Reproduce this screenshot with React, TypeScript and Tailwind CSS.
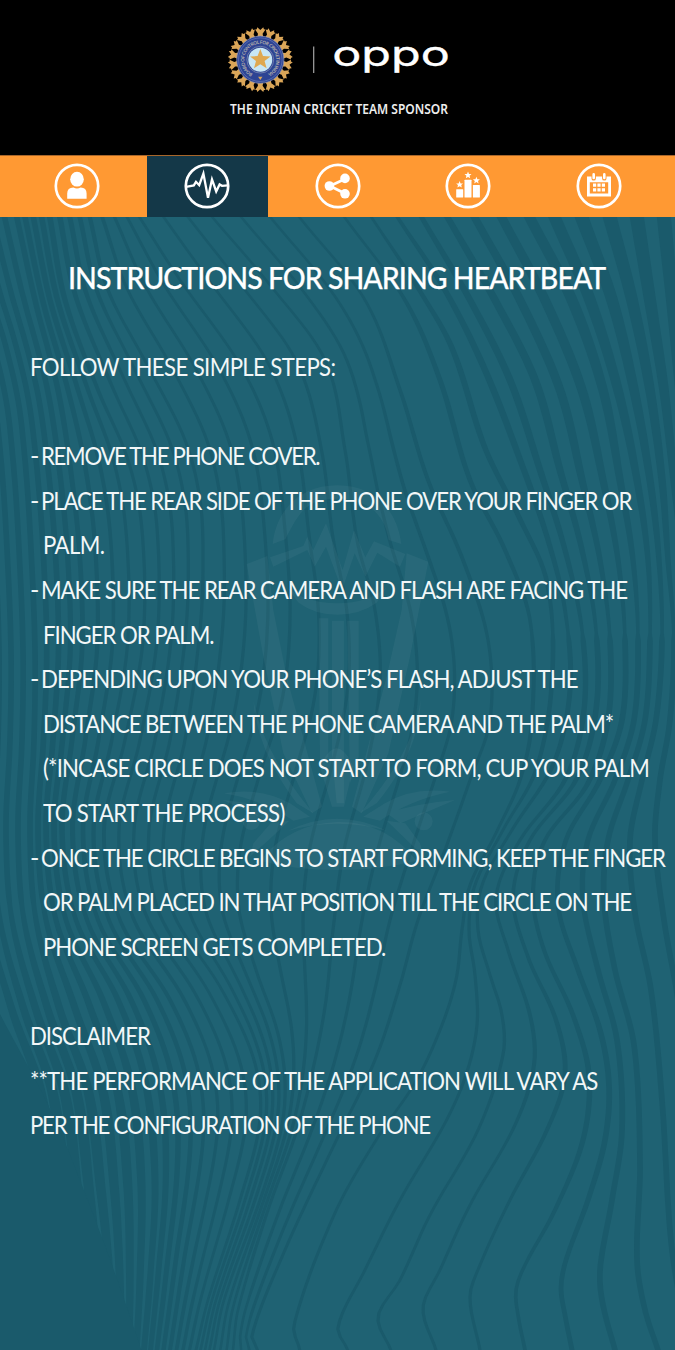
import type { ReactNode } from "react";

type Pt = [number, number];

/* ---------- wavy background ---------- */

const masters: { pts: Pt[]; between: number }[] = [
  { between: 3, pts: [[-32, 218], [-12, 290], [4, 340], [18, 400], [25, 460], [30, 530], [35, 650], [34, 740], [30, 830], [36, 920], [60, 1010], [88, 1090], [101, 1190], [109, 1270], [114, 1350]] },
  { between: 3, pts: [[17, 218], [35, 300], [58, 390], [72, 480], [80, 560], [82, 650], [72, 740], [62, 830], [76, 920], [118, 1000], [145, 1080], [155, 1180], [150, 1280], [144, 1350]] },
  { between: 3, pts: [[50, 218], [65, 300], [98, 390], [128, 460], [142, 530], [143, 640], [125, 740], [104, 830], [120, 920], [170, 1000], [198, 1070], [203, 1140], [184, 1260], [170, 1350]] },
  { between: 3, pts: [[90, 218], [108, 290], [150, 370], [185, 440], [200, 500], [203, 560], [200, 630], [185, 740], [164, 830], [172, 910], [222, 990], [254, 1060], [260, 1120], [240, 1200], [208, 1300], [196, 1350]] },
  { between: 2, pts: [[140, 218], [180, 280], [240, 365], [272, 440], [285, 530], [290, 620], [282, 700], [258, 780], [240, 850], [239, 910], [256, 970], [277, 1030], [285, 1080], [281, 1130], [260, 1200], [224, 1300], [214, 1350]] },
  { between: 2, pts: [[213, 218], [270, 285], [325, 360], [345, 450], [357, 540], [375, 610], [380, 680], [368, 760], [344, 850], [333, 930], [326, 1000], [315, 1060], [297, 1130], [268, 1210], [238, 1310], [233, 1350]] },
  { between: 0, pts: [[300, 218], [365, 300], [400, 390], [428, 480], [463, 560], [488, 640], [490, 720], [470, 780], [445, 850], [418, 920], [400, 985], [375, 1060], [335, 1143], [285, 1250], [252, 1335], [258, 1350]] },
  { between: 0, pts: [[345, 218], [405, 300], [440, 380], [470, 480], [505, 550], [530, 620], [532, 720], [520, 780], [495, 835], [470, 885], [462, 930], [456, 980], [440, 1030], [415, 1083], [378, 1137], [335, 1213], [294, 1325], [300, 1350]] },
  { between: 0, pts: [[372, 218], [418, 288], [452, 348], [485, 448], [518, 515], [547, 582], [552, 680], [536, 770], [503, 830], [475, 885], [469, 930], [475, 975], [477, 1025], [466, 1075], [445, 1123], [400, 1200], [365, 1270], [338, 1327], [348, 1350]] },
  { between: 0, pts: [[398, 218], [445, 290], [485, 370], [522, 465], [548, 540], [565, 610], [570, 690], [553, 765], [512, 830], [482, 885], [478, 930], [490, 975], [502, 1015], [503, 1055], [478, 1130], [430, 1215], [400, 1280], [378, 1317], [391, 1350]] },
  { between: 0, pts: [[422, 218], [470, 300], [510, 380], [540, 470], [565, 550], [582, 630], [584, 710], [565, 780], [520, 840], [496, 897], [508, 950], [530, 1015], [534, 1065], [515, 1125], [470, 1205], [440, 1270], [423, 1308], [436, 1350]] },
  { between: 0, pts: [[448, 218], [495, 300], [535, 380], [560, 470], [582, 550], [596, 630], [596, 710], [576, 780], [530, 840], [513, 897], [528, 957], [556, 1020], [565, 1075], [547, 1130], [510, 1200], [480, 1265], [470, 1297], [480, 1350]] },
  { between: 0, pts: [[475, 218], [520, 300], [560, 390], [582, 480], [600, 560], [610, 640], [608, 720], [587, 785], [545, 840], [533, 895], [544, 950], [573, 1015], [589, 1075], [583, 1140], [555, 1210], [525, 1265], [516, 1290], [518, 1315], [525, 1350]] },
  { between: 0, pts: [[502, 218], [545, 300], [582, 390], [603, 480], [618, 560], [625, 640], [622, 720], [600, 780], [566, 840], [558, 905], [578, 970], [600, 1030], [609, 1085], [605, 1140], [588, 1200], [566, 1260], [561, 1288], [565, 1315], [572, 1350]] },
  { between: 0, pts: [[530, 218], [572, 300], [603, 390], [620, 480], [633, 560], [638, 640], [634, 720], [615, 780], [588, 840], [583, 900], [598, 970], [617, 1040], [622, 1130], [612, 1200], [600, 1270], [603, 1305], [615, 1350]] },
  { between: 0, pts: [[555, 218], [590, 300], [618, 390], [637, 480], [648, 560], [650, 640], [645, 720], [628, 780], [608, 840], [604, 900], [615, 970], [634, 1045], [640, 1163], [637, 1260], [645, 1310], [658, 1350]] },
  { between: 0, pts: [[582, 218], [612, 300], [634, 390], [650, 480], [659, 560], [662, 640], [656, 720], [642, 780], [630, 840], [635, 913], [651, 990], [662, 1100], [672, 1250], [690, 1350]] },
  { between: 0, pts: [[610, 218], [632, 300], [650, 390], [662, 480], [668, 560], [674, 640], [670, 720], [660, 780], [655, 840], [664, 920], [678, 1000], [690, 1100], [700, 1350]] },
  { between: 0, pts: [[637, 218], [650, 300], [664, 390], [674, 480], [682, 560], [694, 700], [690, 830], [700, 1000], [720, 1350]] },
  { between: 0, pts: [[664, 218], [672, 300], [680, 390], [690, 500], [700, 700], [710, 1000], [730, 1350]] },
];

function xAt(pts: Pt[], y: number): number {
  let i = 0;
  while (i < pts.length - 2 && y > pts[i + 1][1]) i++;
  const [x0, y0] = pts[i];
  const [x1, y1] = pts[i + 1];
  const slope = (a: number) => {
    const p = pts[Math.max(0, a - 1)];
    const n = pts[Math.min(pts.length - 1, a + 1)];
    return (n[0] - p[0]) / (n[1] - p[1]);
  };
  const h = y1 - y0;
  const t = (y - y0) / h;
  const t2 = t * t;
  const t3 = t2 * t;
  return (
    (2 * t3 - 3 * t2 + 1) * x0 +
    (t3 - 2 * t2 + t) * h * slope(i) +
    (-2 * t3 + 3 * t2) * x1 +
    (t3 - t2) * h * slope(i + 1)
  );
}

function ribbonWidth(x: number, y: number): number {
  let w = 3.2;
  if (x > 380 && y < 640) w += Math.min(11, (x - 380) / 18) * ((640 - y) / 420);
  if (y >= 640) w += Math.max(0, Math.min(2.5, (x - 500) / 40));
  w += Math.max(0, Math.min(2.4, (120 - x) / 26)) * (y < 900 ? 1 : 0.6);
  if (y > 900) {
    const depth = Math.min(1, (y - 900) / 220);
    const taper = y > 1150 ? 1 - (y - 1150) / 420 : 1;
    w += depth * taper * Math.max(0, Math.min(6.5, (205 - x) / 12));
    if (y > 1150 && x > 150 && x < 250) w -= ((y - 1150) / 200) * 0.7;
  }
  return w;
}

const ys = Array.from({ length: 143 }, (_, i) => 217 + i * 8);

function ribbon(x: (y: number) => number): string {
  const left = ys.map((y) => `${(x(y) - ribbonWidth(x(y), y) / 2).toFixed(1)} ${y}`);
  const right = ys.map((y) => `${(x(y) + ribbonWidth(x(y), y) / 2).toFixed(1)} ${y}`).reverse();
  return `M${left.join("L")}L${right.join("L")}Z`;
}

const ribbons: string[] = masters.flatMap((m, i) => {
  const next = masters[i + 1];
  return Array.from({ length: next ? m.between + 1 : 1 }, (_, k) => {
    const t = k / (m.between + 1);
    return ribbon((y) => xAt(m.pts, y) * (1 - t) + (next ? xAt(next.pts, y) * t : 0));
  });
});

const edgeRibbons: string[] = [12, 24, 36, 48].map((d) => ribbon((y) => xAt(masters[0].pts, y) - d));

function Waves() {
  return (
    <svg className="absolute inset-0 h-full w-full" viewBox="0 217 675 1133" aria-hidden="true">
      <g fill="#1a5a6b">
        {[...edgeRibbons, ...ribbons].map((d) => (
          <path key={d} d={d} />
        ))}
        <path d="M-2 1010C18 1050 50 1100 74 1165C98 1225 120 1285 142 1352H-2Z" />
      </g>
      <Emblem />
    </svg>
  );
}

function Emblem() {
  return (
    <g transform="translate(220 470) scale(.3333)" fill="#fff" fillOpacity=".042" stroke="none">
      <path d="M158 222C170 110 250 46 352 46S530 110 544 222L506 210C494 130 440 86 352 86S240 120 196 208Z" />
      <path d="M150 262L250 228L262 200L280 240L318 160L368 300L402 180L436 262L462 214L556 252L540 290L472 248L436 320L404 250L366 360L318 230L284 290L262 240L160 290Z" />
      <path d="M200 352Q260 400 352 400T500 352L470 398Q420 434 352 434T236 398Z" />
      <path d="M80 282L142 258L160 420L200 620L306 1010L276 1030L190 850L130 560Z" />
      <path d="M625 275L560 250L545 420L500 620L396 1010L425 1030L505 850L570 560Z" />
      <path d="M296 445H325V860L300 880ZM336 452H372V1000H350L336 860ZM382 452H416V860L390 940Z" />
      <path d="M300 890Q350 780 400 890L372 1010H336Z" />
      <path d="M12 970Q120 950 210 1000L270 1040L220 1052Q130 990 12 970ZM8 990Q120 1000 200 1030L160 1060ZM100 690Q130 850 280 1030L230 1000Q110 840 100 690Z" />
      <path d="M690 965Q580 950 495 1000L430 1040L480 1052Q570 990 690 965ZM705 990Q590 1000 500 1030L542 1060ZM602 690Q580 850 420 1030L470 1000Q600 840 602 690Z" />
      <path d="M500 1052L556 1060L600 1120L612 1160L560 1110ZM208 1052L152 1060L100 1120L90 1160L146 1110Z" />
      <path d="M205 1082Q350 1010 500 1082Q350 1040 205 1082Z" />
      <path d="M120 1172Q210 1060 352 1056T590 1172Q480 1200 352 1200T120 1172Z" />
      <circle cx="94" cy="1054" r="26" />
      <circle cx="611" cy="1054" r="27" />
    </g>
  );
}

/* ---------- header lockup ---------- */

function Crest() {
  const petals = Array.from({ length: 18 }, (_, i) => i * 20);
  return (
    <g>
      {petals.map((a) => (
        <path
          key={a}
          transform={`rotate(${a})`}
          d="M-3-22.5L-2.3-26L-5.2-30.2L-3.6-30.4L-3-32.4L0-29.6L3-32.4L3.6-30.4L5.2-30.2L2.3-26L3-22.5Z"
          fill="#dba658"
        />
      ))}
      <circle r="23.6" fill="#2d4494" stroke="#8f97b8" strokeWidth=".7" />
      <circle r="21.8" fill="none" stroke="#7f8fc6" strokeWidth=".5" />
      <circle r="13.4" fill="none" stroke="#8a93b4" strokeWidth=".7" />
      <circle r="12" fill="#c8e7f5" />
      <path
        d="M0-10.6L2.7-3.6L10.2-3.3L4.3 1.4L6.3 8.6L0 4.5L-6.3 8.6L-4.3 1.4L-10.2-3.3L-2.7-3.6Z"
        fill="#dfa850"
      />
      <path d="M-2.2 17H2.2L0 20.4Z" fill="#dba658" />
      <path id="crest-ring" d="M-7.5 14.2A16 16 0 1 1 7.5 14.2" fill="none" />
      <text fill="#b9b3ac" fontSize="4.6" fontWeight="700" className="font-['Lato',sans-serif]">
        <textPath href="#crest-ring" textLength="84">
          BOARD OF CONTROL FOR CRICKET IN INDIA
        </textPath>
      </text>
    </g>
  );
}

function Header() {
  return (
    <header className="flex h-[155px] justify-center bg-black pt-5">
      <svg className="h-[100px] w-[275px]" viewBox="200 20 275 100" role="img" aria-label="The Indian Cricket Team Sponsor">
        <g transform="translate(260.3 59.7)">
          <Crest />
        </g>
        <path d="M313.7 46.5V73" stroke="#a5a5a5" strokeWidth="1.2" />
        <text x="332.3" y="66.2" fontSize="34.5" textLength="117.5" lengthAdjust="spacingAndGlyphs" fill="#fff" stroke="#fff" strokeWidth=".35" className="font-['Inter',sans-serif]">
          oppo
        </text>
        <text x="230" y="113.9" fontSize="13.8" fontWeight="600" textLength="218" lengthAdjust="spacingAndGlyphs" fill="#ededed" className="font-['Noto_Sans',sans-serif]">
          THE INDIAN CRICKET TEAM SPONSOR
        </text>
      </svg>
    </header>
  );
}

/* ---------- navigation ---------- */

function Badge({ children }: { children: ReactNode }) {
  return (
    <svg className="size-[46px]" viewBox="-23 -23 46 46" fill="#fff">
      <circle r="21.2" fill="none" stroke="#fff" strokeWidth="2.7" />
      {children}
    </svg>
  );
}

const star = "M0-3.6L1-1.2L3.5-1.1L1.6.5L2.2 3L0 1.7L-2.2 3L-1.6.5L-3.5-1.1L-1-1.2Z";

function Nav() {
  return (
    <nav className="flex h-[62px] border-t border-[#a8662a] bg-[#ff9933] pb-px">
      <div className="flex w-[146.5px] items-center justify-center pl-[7px]">
        <Badge>
          <ellipse cx="0" cy="-6.8" rx="6.8" ry="7.4" />
          <path d="M-9.8 12.8V7.5Q-9.8 1.8-3.6 1.6Q0 3.6 3.6 1.6Q9.6 1.8 9.6 7.5V12.8Z" />
        </Badge>
      </div>
      <div className="-mb-px flex w-[121px] items-center justify-center bg-[#143848] pb-px">
        <Badge>
          <path
            d="M-21 .8L-13.2-.6L-11-4.2L-7.8-.8L-3.6-12.5L1 11.8L5-6.6L9.2 5.4L12.6-1.6L15-.2L21-.6"
            fill="none"
            stroke="#fff"
            strokeWidth="2.3"
            strokeLinejoin="miter"
          />
        </Badge>
      </div>
      <div className="flex w-[140.5px] items-center justify-center">
        <Badge>
          <path d="M8-7.4L-8 0L8 8" fill="none" stroke="#fff" strokeWidth="2.8" />
          <circle cx="-8.6" cy="0" r="4.8" />
          <circle cx="7" cy="-7.6" r="4.8" />
          <circle cx="7" cy="7.8" r="4.8" />
        </Badge>
      </div>
      <div className="flex w-[120px] items-center justify-center">
        <Badge>
          <rect x="-11.8" y="3.2" width="7" height="8.2" rx=".5" />
          <rect x="-3.5" y="-6.2" width="7" height="17.6" rx=".5" />
          <rect x="4.9" y="-1" width="7" height="12.4" rx=".5" />
          <path d={star} transform="translate(-8.4 -1.4)" />
          <path d={star} transform="translate(0 -10.8)" />
          <path d={star} transform="translate(8.4 -5.6)" />
        </Badge>
      </div>
      <div className="flex w-[147px] items-center justify-center pr-[6px]">
        <Badge>
          <path fillRule="evenodd" d="M-12-9.6H12V10.4H-12ZM-9.2-3.8V7.6H9.2V-3.8Z" />
          <path d="M-5.3-12.3V-7.6M5.3-12.3V-7.6" stroke="#ff9933" strokeWidth="4.4" strokeLinecap="round" />
          <path d="M-5.3-11.6V-8M5.3-11.6V-8" stroke="#fff" strokeWidth="2.6" strokeLinecap="round" />
          <path d="M-6-2.4H-2.8V.8H-6ZM-1.6-2.4H1.6V.8H-1.6ZM2.8-2.4H6V.8H2.8ZM-6 2.2H-2.8V5.4H-6ZM-1.6 2.2H1.6V5.4H-1.6ZM2.8 2.2H6V5.4H2.8Z" />
        </Badge>
      </div>
    </nav>
  );
}

/* ---------- instructions ---------- */

function Line({ bullet, indent, tracking, children }: { bullet?: boolean; indent?: boolean; tracking: string; children: string }) {
  return (
    <div className={indent ? "flex h-[44.6px] pl-[13.3px]" : "flex h-[44.6px]"}>
      {bullet && <span className="w-[10.5px] shrink-0">-</span>}
      <span className={`origin-left scale-x-[.874] whitespace-nowrap ${tracking}`}>{children}</span>
    </div>
  );
}

export default function App() {
  return (
    <div className="flex h-[1350px] w-[675px] flex-col overflow-hidden bg-black">
      <Header />
      <Nav />
      <main className="relative flex-1 overflow-hidden bg-[#1f6273] font-['Lato',sans-serif] text-[#f2f7f8]">
        <Waves />
        <div className="relative flex flex-col pl-[30px] text-[25.4px] leading-[44.6px]">
          <h1 className="mt-[38px] flex h-[45px] pl-[37.5px] text-[31px] font-medium text-white [-webkit-text-stroke:0.25px_#fff]">
            <span className="origin-left scale-x-[.92] whitespace-nowrap tracking-[-1.07px]">INSTRUCTIONS FOR SHARING HEARTBEAT</span>
          </h1>
          <div className="mt-[44px]">
            <Line tracking="tracking-[-0.72px]">FOLLOW THESE SIMPLE STEPS:</Line>
          </div>
          <div className="mt-[44.6px]">
            <Line bullet tracking="tracking-[-1.5px]">REMOVE THE PHONE COVER.</Line>
            <Line bullet tracking="tracking-[-1.29px]">PLACE THE REAR SIDE OF THE PHONE OVER YOUR FINGER OR</Line>
            <Line indent tracking="tracking-[-0.7px]">PALM.</Line>
            <Line bullet tracking="tracking-[-1.19px]">MAKE SURE THE REAR CAMERA AND FLASH ARE FACING THE</Line>
            <Line indent tracking="tracking-[-1.2px]">FINGER OR PALM.</Line>
            <Line bullet tracking="tracking-[-1.05px]">DEPENDING UPON YOUR PHONE’S FLASH, ADJUST THE</Line>
            <Line indent tracking="tracking-[-1.27px]">DISTANCE BETWEEN THE PHONE CAMERA AND THE PALM*</Line>
            <Line indent tracking="tracking-[-0.97px]">(*INCASE CIRCLE DOES NOT START TO FORM, CUP YOUR PALM</Line>
            <Line indent tracking="tracking-[-0.8px]">TO START THE PROCESS)</Line>
            <Line bullet tracking="tracking-[-1.24px]">ONCE THE CIRCLE BEGINS TO START FORMING, KEEP THE FINGER</Line>
            <Line indent tracking="tracking-[-1.25px]">OR PALM PLACED IN THAT POSITION TILL THE CIRCLE ON THE</Line>
            <Line indent tracking="tracking-[-1.14px]">PHONE SCREEN GETS COMPLETED.</Line>
          </div>
          <div className="mt-[44.6px]">
            <Line tracking="tracking-[-1.15px]">DISCLAIMER</Line>
            <Line tracking="tracking-[-1px]">**THE PERFORMANCE OF THE APPLICATION WILL VARY AS</Line>
            <Line tracking="tracking-[-1.43px]">PER THE CONFIGURATION OF THE PHONE</Line>
          </div>
        </div>
      </main>
    </div>
  );
}
